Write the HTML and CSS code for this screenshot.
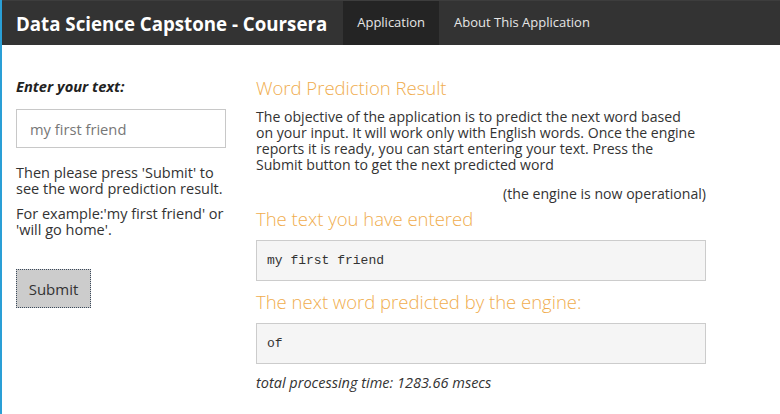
FILE: index.html
```html
<!DOCTYPE html>
<html>
<head>
<meta charset="utf-8">
<link rel="stylesheet" href="styles.css">
</head>
<body>
<nav class="navbar">
  <span class="brand">Data Science Capstone - Coursera</span>
  <ul class="nav">
    <li class="nav-item active">Application</li>
    <li class="nav-item">About This Application</li>
  </ul>
</nav>
<div class="page">
  <aside class="sidebar">
    <label class="label">Enter your text:</label>
    <div class="input">my first friend</div>
    <p class="help">Then please press 'Submit' to see the word prediction result.</p>
    <p class="help">For example:'my first friend' or 'will go home'.</p>
    <button class="btn">Submit</button>
  </aside>
  <main class="main">
    <h3 class="title">Word Prediction Result</h3>
    <p class="desc">The objective of the application is to predict the next word based on your input. It will work only with English words. Once the engine reports it is ready, you can start entering your text. Press the Submit button to get the next predicted word</p>
    <p class="status">(the engine is now operational)</p>
    <h3 class="title">The text you have entered</h3>
    <pre class="out">my first friend</pre>
    <h3 class="title">The next word predicted by the engine:</h3>
    <pre class="out">of</pre>
    <p class="time">total processing time: 1283.66 msecs</p>
  </main>
</div>
</body>
</html>
```
FILE: styles.css
```css
* { box-sizing: border-box; }
html, body { margin: 0; padding: 0; }
body {
  font-family: "Open Sans", "DejaVu Sans", sans-serif;
  font-size: 14.5px;
  color: #333;
  background: #fff;
  border-left: 2px solid #2a9fd6;
  height: 414px;
  overflow: hidden;
}
.navbar {
  display: flex;
  align-items: stretch;
  height: 45px;
  background: #333333;
  border-top: 1px solid #3d3d3d;
  padding-left: 14px;
}
.brand {
  display: flex;
  align-items: center;
  font-size: 18.7px;
  font-weight: 700;
  color: #fff;
  padding-right: 16px;
}
.nav {
  display: flex;
  list-style: none;
  margin: 0;
  padding: 0;
}
.nav-item {
  display: flex;
  align-items: center;
  padding: 0 15px 2px;
  font-size: 13px;
  color: #e6e6e6;
}
.nav-item.active { background: #242424; padding: 0 14px 2px; }
.page {
  display: grid;
  grid-template-columns: 254px 450px;
}
.sidebar {
  padding: 32px 0 0 14px;
}
.label {
  display: block;
  font-weight: 700;
  font-style: italic;
  color: #222;
  font-size: 14.7px;
  line-height: 18px;
  margin-bottom: 14px;
}
.input {
  width: 210px;
  height: 39px;
  border: 1px solid #c8c8c8;
  padding: 0 13px;
  display: flex;
  align-items: center;
  font-size: 14.7px;
  color: #777;
}
.help {
  width: 212px;
  margin: 17px 0 0;
  line-height: 16px;
  color: #333;
}
.help + .help { margin-top: 9px; }
.btn {
  margin-top: 31px;
  width: 75px;
  height: 39px;
  background: #cccccc;
  border: 1px dotted #3b4a5c;
  font-family: inherit;
  font-size: 15px;
  color: #333;
  padding: 0;
}
.main { padding-top: 31px; }
.title {
  margin: 0;
  font-weight: 300;
  font-size: 18.5px;
  color: #f0ad4e;
  line-height: 24px;
}
.desc {
  margin: 9px 0 0;
  max-width: 440px;
  line-height: 16px;
  font-size: 14.1px;
}
.status {
  text-align: right;
  margin: 13px 0 5px;
  line-height: 16px;
  font-size: 14.1px;
}
.out {
  margin: 9px 0 9px;
  height: 41px;
  background: #f5f5f5;
  border: 1px solid #cccccc;
  padding: 0 10px;
  display: flex;
  align-items: center;
  font-family: "Liberation Mono", "Courier New", monospace;
  font-size: 13px;
  color: #333;
}
.time {
  margin: 9px 0 0;
  font-style: italic;
  font-size: 14.5px;
}
```
